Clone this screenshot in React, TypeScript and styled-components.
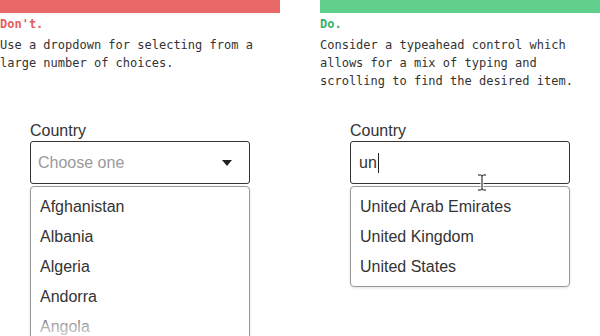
import React from "react";
import styled, { createGlobalStyle } from "styled-components";

const Global = createGlobalStyle`
  html, body { margin: 0; padding: 0; background: #fff; }
  body { width: 600px; height: 336px; overflow: hidden; }
`;

const Page = styled.div`
  display: grid;
  grid-template-columns: 280px 280px;
  column-gap: 40px;
  height: 336px;
  overflow: hidden;
`;

const Column = styled.section`
  display: flex;
  flex-direction: column;
`;

const Bar = styled.div<{ $tone: "bad" | "good" }>`
  height: 13px;
  background: ${(p) => (p.$tone === "bad" ? "#E96868" : "#5FCF8B")};
`;

const Heading = styled.div<{ $tone: "bad" | "good" }>`
  margin-top: 2px;
  font-family: "DejaVu Sans Mono", "Liberation Mono", monospace;
  font-size: 12px;
  font-weight: bold;
  line-height: 18px;
  color: ${(p) => (p.$tone === "bad" ? "#E35F5F" : "#37B368")};
`;

const Desc = styled.p`
  margin: 3px 0 0;
  min-height: 54px;
  font-family: "DejaVu Sans Mono", "Liberation Mono", monospace;
  font-size: 12px;
  line-height: 18px;
  color: #333;
`;

const Field = styled.div`
  margin: 32px 0 0 30px;
  width: 220px;
  font-family: "Liberation Sans", Arial, sans-serif;
  position: relative;
`;

const Label = styled.div`
  font-size: 16px;
  line-height: 18px;
  color: #333;
  margin-bottom: 1px;
`;

const Input = styled.div`
  box-sizing: border-box;
  height: 43px;
  border: 1px solid #333;
  border-radius: 3px;
  padding: 0 17px 0 7px;
  display: flex;
  align-items: center;
  justify-content: space-between;
  font-size: 16px;
`;

const Placeholder = styled.span`
  color: #9a9a9a;
`;

const Typed = styled.span`
  color: #333;
  display: inline-flex;
  align-items: center;
  padding-left: 1px;
`;

const Caret = styled.span`
  display: inline-block;
  width: 1px;
  height: 20px;
  background: #222;
  margin-left: 1px;
`;

const Arrow = styled.span`
  width: 0;
  height: 0;
  border-left: 5px solid transparent;
  border-right: 5px solid transparent;
  border-top: 6px solid #222;
`;

const List = styled.ul<{ $cut?: boolean }>`
  position: relative;
  list-style: none;
  margin: 2px 0 0;
  padding: 5px 0 ${(p) => (p.$cut ? "40px" : "4px")};
  border: 1px solid #999;
  border-radius: 4px;
  box-shadow: 0 1px 3px rgba(0, 0, 0, 0.12);
  font-size: 16px;
  color: #333;
`;

const Item = styled.li`
  height: 30px;
  line-height: 30px;
  padding-left: 9px;
`;

const Fade = styled.div`
  position: absolute;
  left: 0;
  right: 0;
  top: 122px;
  height: 30px;
  background: linear-gradient(to bottom, rgba(255, 255, 255, 0), rgba(255, 255, 255, 0.6) 60%, rgba(255, 255, 255, 0.8));
`;

const Cursor = styled.svg`
  position: absolute;
  left: 127px;
  top: 52px;
`;

const leftItems = ["Afghanistan", "Albania", "Algeria", "Andorra", "Angola"];
const rightItems = ["United Arab Emirates", "United Kingdom", "United States"];

const beam =
  "M1 1 H3.5 Q5 1 5 2.5 Q5 1 6.5 1 H9 M5 2.5 V14.5 M1 16 H3.5 Q5 16 5 14.5 Q5 16 6.5 16 H9";

export default function App() {
  return (
    <>
      <Global />
      <Page>
        <Column>
          <Bar $tone="bad" />
          <Heading $tone="bad">Don't.</Heading>
          <Desc>
            Use a dropdown for selecting from a
            <br />
            large number of choices.
          </Desc>
          <Field>
            <Label>Country</Label>
            <Input>
              <Placeholder>Choose one</Placeholder>
              <Arrow />
            </Input>
            <List $cut>
              {leftItems.map((c) => (
                <Item key={c}>{c}</Item>
              ))}
              <Fade />
            </List>
          </Field>
        </Column>
        <Column>
          <Bar $tone="good" />
          <Heading $tone="good">Do.</Heading>
          <Desc>
            Consider a typeahead control which
            <br />
            allows for a mix of typing and
            <br />
            scrolling to find the desired item.
          </Desc>
          <Field>
            <Label>Country</Label>
            <Input>
              <Typed>
                un
                <Caret />
              </Typed>
            </Input>
            <List>
              {rightItems.map((c) => (
                <Item key={c}>{c}</Item>
              ))}
            </List>
            <Cursor width="10" height="17" viewBox="0 0 10 17">
              <path d={beam} fill="none" stroke="#fff" strokeWidth="3" />
              <path d={beam} fill="none" stroke="#111" strokeWidth="1" />
            </Cursor>
          </Field>
        </Column>
      </Page>
    </>
  );
}
